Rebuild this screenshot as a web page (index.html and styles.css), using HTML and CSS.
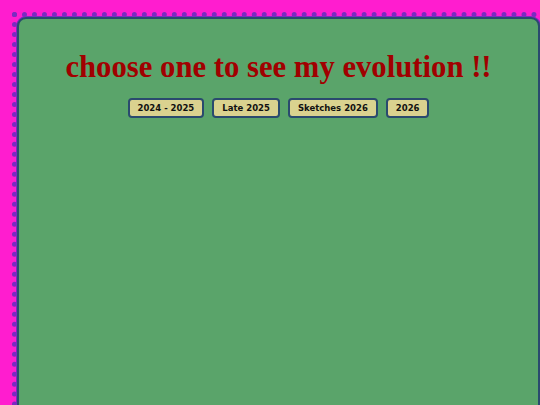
FILE: index.html
```html
<!DOCTYPE html>
<html lang="en">
<head>
    <meta charset="UTF-8">
    <meta name="viewport" content="width=device-width, initial-scale=1.0">
    <title>My Evolution</title>
    <link rel="stylesheet" href="styles.css">
</head>
<body>
    <div class="frame">
        <div class="board">
            <h1 class="title">choose one to see my evolution !!</h1>
            <div class="choices">
                <button class="choice">2024 - 2025</button>
                <button class="choice">Late 2025</button>
                <button class="choice">Sketches 2026</button>
                <button class="choice">2026</button>
            </div>
        </div>
    </div>
</body>
</html>
```

FILE: styles.css
```css
body {
    margin: 0;
    background-color: #ff1dcf;
    overflow: hidden;
    height: 405px;
}

.frame {
    margin: 12px 0 0 12px;
    width: 540px;
    border: 5px dotted #7a2cc0;
    border-right: none;
    border-bottom: none;
}

.board {
    background-color: #5aa46a;
    border: 2px solid #2a4a6e;
    border-radius: 9px;
    box-shadow: 0 0 0 1px #7a2cc0;
    height: 420px;
    box-sizing: border-box;
    text-align: center;
    width: 523px;
}

.title {
    font-family: "Liberation Serif", serif;
    font-size: 30.7px;
    font-weight: bold;
    color: #a10000;
    margin: 0;
    padding-top: 31px;
}

.choices {
    display: flex;
    justify-content: center;
    gap: 8px;
    margin-top: 13px;
}

.choice {
    font-family: "DejaVu Sans", sans-serif;
    font-size: 8.5px;
    font-weight: bold;
    color: #111;
    background-color: #dad28f;
    border: 2px solid #2a4a6e;
    border-radius: 4px;
    height: 20px;
    padding: 0 8px;
}
```
